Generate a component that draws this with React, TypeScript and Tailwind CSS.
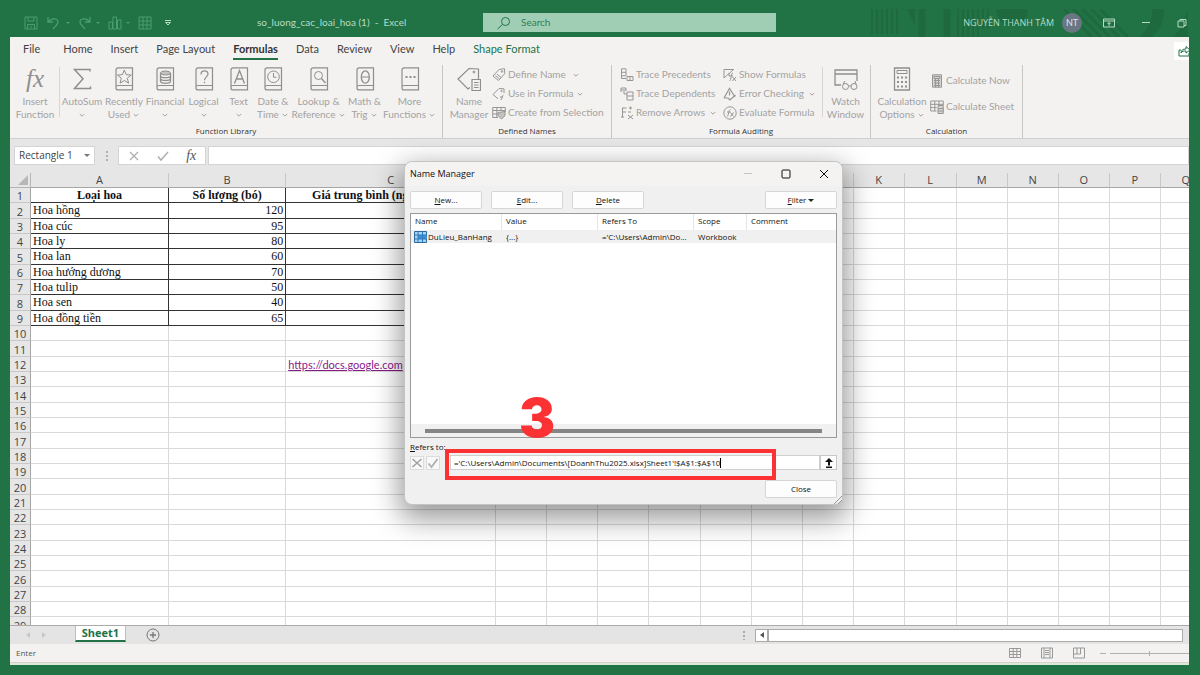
import type { ReactNode } from "react";

type IconProps = { children: ReactNode; box?: string; className?: string };

function Icon({ children, box = "0 0 24 24", className = "h-6 w-6" }: IconProps) {
  return (
    <svg viewBox={box} className={`shrink-0 ${className}`} fill="none" stroke="currentColor" strokeWidth="1" aria-hidden="true">
      {children}
    </svg>
  );
}

function Chevron({ className = "" }: { className?: string }) {
  return (
    <Icon box="0 0 8 8" className={`h-2 w-2 ${className}`}>
      <path d="M1.8 3 4 5.2 6.2 3" />
    </Icon>
  );
}

function Book({ children }: { children: ReactNode }) {
  return (
    <Icon>
      <path d="M20.5 18.500V.9H6a2 2 0 0 0-2 2v18a2 2 0 0 0 2 2h14.500v-4.400H6a2 2 0 0 0-2 2" strokeWidth="1.200" />
      {children}
    </Icon>
  );
}

const libraryButtons: { lines: [string, string]; width: string; icon: ReactNode }[] = [
  {
    lines: ["AutoSum", ""],
    width: "w-[42px]",
    icon: (
      <Icon>
        <path d="M20 4.500V2.500H4.500l8.500 9.300-8.500 9.700H20.500v-2" strokeWidth="1.500" />
      </Icon>
    ),
  },
  {
    lines: ["Recently", "Used"],
    width: "w-[42px]",
    icon: (
      <Book>
        <path d="m12.300 3 1.900 4.700 5 .3-3.900 3.200 1.300 5-4.300-2.700-4.300 2.700 1.300-5L5.400 8l5-.3z" />
      </Book>
    ),
  },
  {
    lines: ["Financial", ""],
    width: "w-[40px]",
    icon: (
      <Book>
        <ellipse cx="12.500" cy="6" rx="5" ry="2" fill="#c4c3c2" />
        <path d="M7.500 6v8c0 1.200 2.200 2.200 5 2.200s5-1 5-2.200V6M7.500 8.700c0 1.200 2.200 2 5 2s5-.8 5-2M7.500 11.400c0 1.200 2.200 2 5 2s5-.8 5-2" strokeWidth="1.300" />
      </Book>
    ),
  },
  {
    lines: ["Logical", ""],
    width: "w-[37px]",
    icon: (
      <Book>
        <path d="M9 7.500c0-2.500 1.600-3.600 3.500-3.600s3.500 1.200 3.500 3.200c0 2.600-3.500 3-3.500 6.200M12.500 14.800v1.500" strokeWidth="1.200" />
      </Book>
    ),
  },
  {
    lines: ["Text", ""],
    width: "w-[33px]",
    icon: (
      <Book>
        <path d="m7.500 16.500 5-13 5 13M9.200 12h6.600" strokeWidth="1.300" />
      </Book>
    ),
  },
  {
    lines: ["Date &", "Time"],
    width: "w-[36px]",
    icon: (
      <Book>
        <circle cx="12.500" cy="9.800" r="5.800" />
        <path d="M12.500 6v4.200h3" />
      </Book>
    ),
  },
  {
    lines: ["Lookup &", "Reference"],
    width: "w-[55px]",
    icon: (
      <Book>
        <circle cx="11.500" cy="8.500" r="4" />
        <path d="m14.500 11.500 4 4.500" strokeWidth="1.300" />
      </Book>
    ),
  },
  {
    lines: ["Math &", "Trig"],
    width: "w-[37px]",
    icon: (
      <Book>
        <ellipse cx="12.300" cy="10" rx="4" ry="6.200" strokeWidth="1.300" />
        <path d="M8.300 10h8" />
      </Book>
    ),
  },
  {
    lines: ["More", "Functions"],
    width: "w-[53px]",
    icon: (
      <Book>
        <path d="M7.500 10h2M11.500 10h2M15.500 10h2" strokeWidth="2" />
      </Book>
    ),
  },
];

type BigProps = { icon: ReactNode; lines: [string, string]; width: string; menu?: boolean };

function BigButton({ icon, lines, width, menu = false }: BigProps) {
  return (
    <button className={`flex shrink-0 flex-col items-center whitespace-nowrap text-[#8f8e8d] ${width}`}>
      {icon}
      <span className="mt-1 text-[10px] leading-[13px] text-[#a3a2a1]">{lines[0]}</span>
      <span className="flex h-[13px] items-center gap-0.5 text-[10px] leading-[13px] text-[#a3a2a1]">
        {lines[1]}
        {menu && <Chevron />}
      </span>
    </button>
  );
}

function SmallButton({ icon, label, menu }: { icon: ReactNode; label: string; menu?: string }) {
  return (
    <button className="flex h-[19px] items-center gap-0.5 whitespace-nowrap text-[10px] text-[#a3a2a1]">
      {icon}
      <span>{label}</span>
      {menu && <Chevron className={menu} />}
    </button>
  );
}

function Group({ title, width, children }: { title: string; width: string; children: ReactNode }) {
  return (
    <section className={`flex shrink-0 flex-col border-r border-[#c8c6c4] ${width}`}>
      <div className="flex flex-1 items-start">{children}</div>
      <h2 className="text-center font-['Open_Sans',sans-serif] text-[8px] leading-[14px] text-[#333]">{title}</h2>
    </section>
  );
}

const small = "h-3.5 w-3.5 text-[#979695]";

const tagIcon = (
  <Icon box="0 0 14 14" className={small}>
    <path d="M1 8 7 1.500l5.500-.8.200 5L6.500 12.500zM3.500 7.500l4 3.500M5 6l4 3.500" />
    <circle cx="10" cy="3.500" r=".8" />
  </Icon>
);
const useIcon = (
  <Icon box="0 0 14 14" className={small}>
    <path d="M6 11.800 1 7.500 7 1.500l5 .3V6M11.500 8c-1.500 0-1.300 4.500-2.800 5M8 10h3" />
    <circle cx="9.500" cy="4" r=".7" />
  </Icon>
);
const createIcon = (
  <Icon box="0 0 14 14" className={small}>
    <path d="M6 11.500H.7v-10h12.600V6M.7 4.500h12.600M.7 8H6M4.800 1.500v10M9 1.500V5" />
    <path d="m6 6.500 7-1v4.200L9.500 13 6 9.500z" fill="#c4c3c2" />
  </Icon>
);
const precedentsIcon = (
  <Icon box="0 0 14 14" className={small}>
    <path d="M1.500.8H6v7H1.500zM1.500 4.300H6M1.500 7.500v3H6M7 8.500h6v4H7zM10 8.500v4" />
  </Icon>
);
const dependentsIcon = (
  <Icon box="0 0 14 14" className={small}>
    <path d="M1 5V1h5v3M1 3h5M4 4v3h3M7 5h6v8H7zM7 9h6" />
  </Icon>
);
const removeIcon = (
  <Icon box="0 0 14 14" className={small}>
    <path d="M2.500 2v9.500M2 2h4.500M9 2h3M10.500.5v3M2 6h4M8 6h3M1 11h3" />
    <path d="m8 9 5 4M13 9l-5 4" />
  </Icon>
);
const showIcon = (
  <Icon box="0 0 14 14" className={small}>
    <path d="M1 10V1.500h10M1 10 10.500 1.500M6 8v-3M10 5c-2-.5-1.500 7-3.500 8M6 8h4M9.500 9l3.500 4M13 9l-3.500 4" />
  </Icon>
);
const errorIcon = (
  <Icon box="0 0 14 14" className={small}>
    <path d="M1 11 6.500 1.500 12 10M6.500 4.500v4M1 11h4M5 11l2 2 5.500-5" strokeWidth="1.200" />
  </Icon>
);
const evaluateIcon = (
  <Icon box="0 0 14 14" className={small}>
    <circle cx="7" cy="7" r="6.200" />
    <path d="M7.500 3.500c-2 0-1.800 7-3.500 7M4 6h3.500M7.500 6.500l3 4M10.500 6.500l-3 4" />
  </Icon>
);
const nowIcon = (
  <Icon box="0 0 14 14" className={small}>
    <path d="M2.500.8h9v12.400h-9zM4 2.500h6v2H4zM4 6.500h6M4 9h6M4 11.500h6M5.500 5v8M8.500 5v8" fill="#d5d4d3" />
  </Icon>
);
const sheetIcon = (
  <Icon box="0 0 14 14" className={small}>
    <path d="M6.500 11H.7V1h12.600v4M.7 4.300h12.600M.7 7.600h6M4.800 1v10M9 1v4" />
    <path d="M8 5.500h5.300v8H8zM8 8.500h5.300M8 11h5.300" fill="#d5d4d3" />
  </Icon>
);

const tabs = ["Home", "Insert", "Page Layout", "Formulas", "Data", "Review", "View", "Help", "Shape Format"];

function TitleBar() {
  const caret = <span className="h-0 w-0 border-x-2 border-t-2 border-x-transparent border-t-[#4a9d6e]" />;
  return (
    <header className="relative flex h-[37px] shrink-0 items-center pt-2 pr-3 font-['Lato','Open_Sans',sans-serif] text-[10px] text-[#b5dcc6]">
      <svg className="absolute right-3 bottom-0 h-7 w-[320px]" viewBox="0 0 320 28" fill="none" stroke="#1f693e" strokeWidth="2" aria-hidden="true">
        <path d="M4 0v25M9 0v25M14 0v25M19 0v25M24 0v25M29 0v25M90 0v28M95 0v28M100 0v28M105 0v28M110 0v28M115 0v20M120 0v20" />
        <path d="M54 0v28M79 0v28" strokeWidth="7" />
        <path d="M39 0l8 18V0zM128 0h32c0 10-6 16-16 16s-16-6-16-16z" fill="#1f693e" stroke="none" />
        <path d="m196 0 28 28M205 0l28 28M214 0l28 28M223 0l28 28M232 0l28 28" strokeWidth="3" />
        <path d="M284 0h12c0 12-3 20-12 28h-13c10-8 13-16 13-28zM320 0v28h-16c10-6 12-18 16-28z" fill="#1f693e" stroke="none" />
      </svg>
      <div className="flex w-[257px] shrink-0 items-center gap-2 pl-6 text-[#4a9d6e]">
        <button aria-label="Save">
          <Icon box="0 0 14 14" className="h-3.5 w-3.5">
            <path d="M1 1h12v12H1zM4 1v4h6V1M3.500 13V8.500h7V13M6 11h2" />
          </Icon>
        </button>
        <button aria-label="Undo" className="flex items-center gap-1.5">
          <Icon box="0 0 14 14" className="h-3.5 w-3.5">
            <path d="M2 1v5h5M2 6c4-5 10-3.500 10 0 0 2.500-3 4.500-5 7" strokeWidth="1.300" />
          </Icon>
          {caret}
        </button>
        <button aria-label="Redo" className="flex items-center gap-1">
          <Icon box="0 0 14 14" className="h-3.5 w-3.5">
            <path d="M12 1v5H7M12 6C8 1 2 2.500 2 6c0 2.500 3 4.500 5 7" strokeWidth="1.300" />
          </Icon>
          {caret}
        </button>
        <button aria-label="Chart" className="flex items-center gap-1">
          <Icon box="0 0 14 14" className="h-3.5 w-3.5">
            <path d="M1 6h3.500v7H1zM5 1h3.500v12H5zM9.500 4H13v9H9.500z" />
          </Icon>
          {caret}
        </button>
        <button aria-label="Table">
          <Icon box="0 0 14 14" className="h-3.5 w-3.5">
            <path d="M1 1h12v12H1zM1 5h12M1 9h12M5 1v12M9 1v12" />
          </Icon>
        </button>
        <button aria-label="Customize" className="ml-1 text-[#b5dcc6]">
          <Icon box="0 0 8 8" className="h-2 w-2">
            <path d="M1 1.500h6M1.500 3.500h5L4 6z" />
          </Icon>
        </button>
      </div>
      <h1 className="w-[226px] shrink-0 whitespace-pre">so_luong_cac_loai_hoa (1)  -  Excel</h1>
      <label className="flex h-[19px] w-[293px] shrink-0 items-center gap-2.5 bg-[#9fceb4] pl-3.5 text-[#217346]">
        <Icon box="0 0 14 14" className="h-3.5 w-3.5">
          <circle cx="8.500" cy="5.500" r="4" />
          <path d="m5.500 8.500-5 4.500" />
        </Icon>
        <input type="search" aria-label="Search" placeholder="Search" className="min-w-0 flex-1 bg-transparent outline-none placeholder:text-[#2f8055]" />
      </label>
      <div className="relative ml-auto flex shrink-0 items-center">
        <span className="font-['Open_Sans',sans-serif] text-[9px] whitespace-nowrap">NGUYỄN THANH TÂM</span>
        <span className="ml-2 flex h-5 w-5 items-center justify-center rounded-full bg-[#6b7683] text-[9px] text-[#dfe6ea]">NT</span>
        <button aria-label="Ribbon display options" className="ml-[21px]">
          <Icon box="0 0 12 12" className="h-3 w-3">
            <path d="M.5 2h11v8H.5zM.5 4h11M6 9V5.500M4.500 7 6 5.500 7.500 7" />
          </Icon>
        </button>
        <button aria-label="Minimize" className="ml-[25px]">
          <Icon box="0 0 12 12" className="h-3 w-3">
            <path d="M2 5.500h8" />
          </Icon>
        </button>
        <button aria-label="Restore" className="ml-6">
          <Icon box="0 0 12 12" className="h-3 w-3">
            <path d="M2 4h6v6H2zM4 4V2.500h6v6H8" />
          </Icon>
        </button>
      </div>
    </header>
  );
}

function Ribbon() {
  return (
    <div className="flex h-[101px] shrink-0 flex-col bg-[#f3f2f1] font-['Lato','Open_Sans',sans-serif]">
      <nav className="flex h-[25px] shrink-0 items-center gap-[18px] overflow-hidden pl-[13px] text-[11px] whitespace-nowrap text-[#444]">
        <button className="mr-[5px]">File</button>
        {tabs.map((tab) =>
          tab === "Formulas" ? (
            <button key={tab} className="flex h-[23px] items-center self-start border-b-2 border-[#217346] pt-1 font-bold text-[#333]">
              {tab}
            </button>
          ) : (
            <button key={tab} className={tab === "Shape Format" ? "text-[#217346]" : ""}>
              {tab}
            </button>
          ),
        )}
        <button aria-label="Share" className="mt-[3px] ml-auto flex h-[18px] w-[15px] items-center overflow-hidden bg-white pl-1 text-[#217346]">
          <Icon box="0 0 12 12" className="h-3 w-3">
            <path d="M3 5H1v6h10V8M3 8c0-3 2-4 5-4V1.500L12 5 8 8V6C6 6 4 6 3 8z" />
          </Icon>
        </button>
      </nav>
      <div className="flex flex-1 overflow-hidden pt-[3px]">
        <Group title="Function Library" width="w-[433px]">
          <div className="flex pt-0.5 pl-px">
            <BigButton
              width="w-[48px]"
              lines={["Insert", "Function"]}
              icon={
                <span className="flex h-6 items-center font-['Liberation_Serif',serif] text-[25px] leading-6 italic" aria-hidden="true">
                  fx
                </span>
              }
            />
            <span className="mr-px h-[50px] w-px bg-[#d8d6d4]" />
            {libraryButtons.map((b) => (
              <BigButton key={b.lines[0]} icon={b.icon} lines={b.lines} width={b.width} menu />
            ))}
          </div>
        </Group>
        <Group title="Defined Names" width="w-[169px]">
          <div className="flex pt-0.5 pl-[5px]">
            <BigButton
              width="w-[42px]"
              lines={["Name", "Manager"]}
              icon={
                <Icon>
                  <path d="M13 20.500 11 22 1 12 12 1.500l9.500.5V12" strokeWidth="1.200" />
                  <circle cx="17" cy="5" r="1" />
                  <path d="M15 12.500h8.500v11H15zM17 15.500h4.500M17 18h4.500M17 20.500h4.500" strokeWidth="1.200" />
                </Icon>
              }
            />
          </div>
          <div className="ml-0.5 flex flex-col">
            <SmallButton icon={tagIcon} label="Define Name" menu="ml-1" />
            <SmallButton icon={useIcon} label="Use in Formula" menu="ml-0" />
            <SmallButton icon={createIcon} label="Create from Selection" />
          </div>
        </Group>
        <Group title="Formula Auditing" width="w-[259px]">
          <div className="flex w-[105px] flex-col pl-2">
            <SmallButton icon={precedentsIcon} label="Trace Precedents" />
            <SmallButton icon={dependentsIcon} label="Trace Dependents" />
            <SmallButton icon={removeIcon} label="Remove Arrows" menu="ml-auto" />
          </div>
          <div className="ml-1.5 flex w-[99px] flex-col">
            <SmallButton icon={showIcon} label="Show Formulas" />
            <SmallButton icon={errorIcon} label="Error Checking" menu="mr-1.5 ml-auto" />
            <SmallButton icon={evaluateIcon} label="Evaluate Formula" />
          </div>
          <div className="flex pt-0.5">
            <span className="h-[50px] w-px bg-[#d8d6d4]" />
            <BigButton
              width="w-[45px]"
              lines={["Watch", "Window"]}
              icon={
                <Icon>
                  <path d="M7 18H1V3h22v11M1 7h22" strokeWidth="1.300" />
                  <circle cx="11.500" cy="19.500" r="3" />
                  <circle cx="20" cy="19.500" r="3" />
                  <path d="M14.500 19h2.500M9 17l2-3M22 17l-1-3" />
                </Icon>
              }
            />
          </div>
        </Group>
        <Group title="Calculation" width="w-[152px]">
          <div className="flex pt-0.5 pl-[6px]">
            <BigButton
              width="w-[50px]"
              lines={["Calculation", "Options"]}
              menu
              icon={
                <Icon>
                  <path d="M4.500 1h15v22h-15z" strokeWidth="1.300" />
                  <path d="M7 3.500h10v3H7z" />
                  <path d="M7 10.500h2m2 0h2m2 0h2M7 15h2m2 0h2m2 0h2M7 19.500h2m2 0h2m2 0h2" strokeWidth="2" />
                </Icon>
              }
            />
          </div>
          <div className="ml-[3px] flex flex-col gap-[7px] pt-1.5">
            <SmallButton icon={nowIcon} label="Calculate Now" />
            <SmallButton icon={sheetIcon} label="Calculate Sheet" />
          </div>
        </Group>
      </div>
    </div>
  );
}

function FormulaBar() {
  return (
    <div className="flex h-[35px] shrink-0 items-start border-t border-[#d2d0ce] bg-[#e6e6e6] pt-[7px] text-[10px] text-[#444]">
      <button className="ml-1 flex h-[19px] w-[81px] shrink-0 items-center justify-between border border-[#d4d4d4] bg-white px-1 whitespace-nowrap">
        Rectangle 1
        <span className="h-0 w-0 border-x-[3px] border-t-[3px] border-x-transparent border-t-[#777]" />
      </button>
      <span className="flex h-[19px] w-[23px] shrink-0 items-center justify-center text-[#b0b0b0]">
        <Icon box="0 0 2 12" className="h-3 w-0.5">
          <path d="M1 1v10" strokeWidth="2" strokeDasharray="2 2" />
        </Icon>
      </span>
      <div className="flex h-[19px] w-[88px] shrink-0 items-center justify-around border border-[#d4d4d4] bg-white text-[#b0b0b0]">
        <button aria-label="Cancel">
          <Icon box="0 0 12 12" className="h-3 w-3">
            <path d="m2 2 8 8M10 2l-8 8" strokeWidth="1.300" />
          </Icon>
        </button>
        <button aria-label="Enter">
          <Icon box="0 0 12 12" className="h-3 w-3">
            <path d="m1 6.500 3 3.500 7-8" strokeWidth="1.500" />
          </Icon>
        </button>
        <button className="font-['Liberation_Serif',serif] text-[14px] leading-4 text-[#555] italic">fx</button>
      </div>
      <input aria-label="Formula" className="ml-0.5 h-[19px] min-w-0 flex-1 border border-[#d4d4d4] bg-white" />
    </div>
  );
}

const flowers: [string, number][] = [
  ["Hoa hồng", 120],
  ["Hoa cúc", 95],
  ["Hoa ly", 80],
  ["Hoa lan", 60],
  ["Hoa hướng dương", 70],
  ["Hoa tulip", 50],
  ["Hoa sen", 40],
  ["Hoa đồng tiền", 65],
];
const columns = "ABCDEFGHIJKLMNOPQ".split("");
const rows = Array.from({ length: 29 }, (_, i) => i + 1);

function cell(row: number, col: string): ReactNode {
  if (row === 1) return { A: "Loại hoa", B: "Số lượng (bó)", C: "Giá trung bình (ngàn đồng/bó)" }[col] ?? null;
  if (row <= 9 && col === "A") return flowers[row - 2][0];
  if (row <= 9 && col === "B") return flowers[row - 2][1];
  if (row === 12 && col === "C")
    return (
      <a href="https://docs.google.com" className="block font-['Lato',sans-serif] text-[11px] leading-[13px] text-[#8a1a8a] underline">
        https://docs.google.com
      </a>
    );
  return null;
}

function cellClass(row: number, col: string) {
  const framed = row <= 9 && (col === "A" || col === "B" || col === "C");
  const border = framed ? "border-[#333]" : "border-[#d9d9d9]";
  const align = row === 1 ? "text-center font-bold" : col === "B" ? "text-right" : "text-left";
  return `border-r border-b px-0.5 ${border} ${align}`;
}

function Sheet() {
  return (
    <div className="min-h-0 flex-1 overflow-hidden bg-white">
      <table className="w-[1202px] table-fixed border-separate border-spacing-0">
        <colgroup>
          <col className="w-[21px]" />
          <col className="w-[138px]" />
          <col className="w-[117px]" />
          <col className="w-[210px]" />
          {columns.slice(3).map((c) => (
            <col key={c} className={c === "L" ? "w-[52px]" : "w-[51px]"} />
          ))}
        </colgroup>
        <thead>
          <tr className="h-[15px] bg-[#e6e6e6] text-[11px] leading-[14px] text-[#444]">
            <th className="border-r border-b border-[#b5b5b5] p-0">
              <svg viewBox="0 0 20 14" className="block h-3.5 w-5" aria-hidden="true">
                <path d="M18 2v10H8z" fill="#b7b7b7" />
              </svg>
            </th>
            {columns.map((c) => (
              <th key={c} scope="col" className="border-r border-b border-r-[#c8c8c8] border-b-[#a6a6a6] p-0 font-normal">
                {c}
              </th>
            ))}
          </tr>
        </thead>
        <tbody>
          {rows.map((r) => (
            <tr key={r} className="h-[15px] text-[12px] leading-[13px] text-[#111] nth-[3n+2]:h-[16px]">
              <th scope="row" className="border-r border-b border-r-[#a6a6a6] border-b-[#c8c8c8] bg-[#e6e6e6] p-0 pt-px text-[11px] font-normal text-[#444]">
                {r}
              </th>
              {columns.map((c) => (
                <td key={c} className={`overflow-hidden pt-px pb-0 align-top font-['Liberation_Serif',serif] whitespace-nowrap ${cellClass(r, c)}`}>
                  {cell(r, c)}
                </td>
              ))}
            </tr>
          ))}
        </tbody>
      </table>
    </div>
  );
}

function Footer() {
  return (
    <footer className="shrink-0">
      <div className="flex h-[19px] items-start border-t border-[#ababab] bg-[#e4e4e4] pr-1.5">
        <div className="flex h-[18px] w-[65px] shrink-0 items-center gap-3 pl-4 text-[#bbb]">
          <button aria-label="Previous sheet" className="h-0 w-0 border-y-[3px] border-r-4 border-y-transparent border-r-[#c8c8c8]" />
          <button aria-label="Next sheet" className="h-0 w-0 border-y-[3px] border-l-4 border-y-transparent border-l-[#c8c8c8]" />
        </div>
        <button className="flex h-4 w-[51px] shrink-0 items-center justify-center border-x border-b-2 border-x-[#c0c0c0] border-b-[#217346] bg-white text-[11px] font-bold text-[#217346]">
          Sheet1
        </button>
        <button aria-label="New sheet" className="mt-0.5 ml-5 text-[#777]">
          <Icon box="0 0 14 14" className="h-3.5 w-3.5">
            <circle cx="7" cy="7" r="6" />
            <path d="M7 4v6M4 7h6" strokeWidth="1.300" />
          </Icon>
        </button>
        <div className="ml-auto flex h-[18px] items-center">
          <Icon box="0 0 2 10" className="mr-2.5 h-2.5 w-0.5 text-[#a8a8a8]">
            <path d="M1 1v9" strokeWidth="2" strokeDasharray="2 2" />
          </Icon>
          <button aria-label="Scroll left" className="flex h-[13px] w-[13px] items-center justify-center border border-[#ababab] bg-white">
            <span className="h-0 w-0 border-y-[3px] border-r-4 border-y-transparent border-r-[#555]" />
          </button>
          <span className="h-[13px] w-[415px] border border-[#ababab] bg-white" />
        </div>
      </div>
      <div className="flex h-[19px] items-center border-b border-[#d9cfc8] bg-[#f3f2f1] pl-1.5 text-[8px] text-[#555]">
        Enter
        <div className="ml-auto flex items-center text-[#999]">
          <button aria-label="Normal view">
            <Icon box="0 0 12 12" className="h-3 w-3">
              <path d="M.5 1.500h11v9H.5zM.5 4.500h11M.5 7.500h11M4.200 1.500v9M7.800 1.500v9" />
            </Icon>
          </button>
          <button aria-label="Page layout view" className="ml-5">
            <Icon box="0 0 12 12" className="h-3 w-3">
              <path d="M.5 1h11v10H.5zM3 1v10M9 1v10M4 3.500h4M4 5.500h4M4 7.500h4" />
            </Icon>
          </button>
          <button aria-label="Page break view" className="ml-5">
            <Icon box="0 0 12 12" className="h-3 w-3">
              <path d="M.5 1h11v10H.5zM.5 7h7V1M4 1v6" />
            </Icon>
          </button>
          <Icon box="0 0 90 12" className="ml-3.5 h-3 w-[90px] text-[#b0b0b0]">
            <path d="M1 6.500h6M11 6.500h79M50.500 4v5" />
          </Icon>
        </div>
      </div>
    </footer>
  );
}

const dialogButton =
  "flex h-[18px] w-[72px] items-center justify-center gap-0.5 rounded-[2px] border border-[#d6d6d6] bg-[#fdfdfd] text-[8px] text-[#111]";

function NameManager() {
  return (
    <div
      role="dialog"
      aria-label="Name Manager"
      className="absolute top-[161px] left-[404px] w-[439px] rounded-lg border border-[#c4c4c4] bg-[#f0f0f0] px-[5px] pb-1.5 text-[8px] text-[#111] shadow-[0_10px_28px_4px_rgba(0,0,0,0.4)]"
    >
      <div className="-mx-[5px] flex h-6 items-center rounded-t-lg bg-[#f4f3f2] pr-3 pl-[5px]">
        <h2 className="text-[9px]">Name Manager</h2>
        <div className="ml-auto flex items-center gap-[26px]">
          <button aria-label="Minimize" className="text-[#c4c4c4]">
            <Icon box="0 0 12 12" className="h-3 w-3">
              <path d="M2 5.500h8" />
            </Icon>
          </button>
          <button aria-label="Maximize">
            <Icon box="0 0 12 12" className="h-3 w-3">
              <rect x="2" y="2" width="8" height="8" rx="1" />
            </Icon>
          </button>
          <button aria-label="Close window">
            <Icon box="0 0 12 12" className="h-3 w-3">
              <path d="m2 2 8 8M10 2l-8 8" />
            </Icon>
          </button>
        </div>
      </div>
      <div className="mt-[5px] flex gap-[9px]">
        <button className={dialogButton}>
          <span><u>N</u>ew...</span>
        </button>
        <button className={dialogButton}>
          <span><u>E</u>dit...</span>
        </button>
        <button className={dialogButton}>
          <span><u>D</u>elete</span>
        </button>
        <button className={`ml-auto ${dialogButton}`}>
          <span><u>F</u>ilter</span>
          <span className="h-0 w-0 border-x-[3px] border-t-[3px] border-x-transparent border-t-[#222]" />
        </button>
      </div>
      <div className="mt-1 flex h-[225px] flex-col border border-[#9a9a9a] bg-white">
        <table className="w-full table-fixed border-separate border-spacing-0 text-left whitespace-nowrap">
          <thead>
            <tr className="h-4 leading-[14px]">
              <th className="w-[91px] border-r border-[#e5e5e5] p-0 pb-0.5 pl-1 font-normal">Name</th>
              <th className="w-[96px] border-r border-[#e5e5e5] p-0 pb-0.5 pl-1 font-normal">Value</th>
              <th className="w-[96px] border-r border-[#e5e5e5] p-0 pb-0.5 pl-1 font-normal">Refers To</th>
              <th className="w-[53px] border-r border-[#e5e5e5] p-0 pb-0.5 pl-1 font-normal">Scope</th>
              <th className="p-0 pb-0.5 pl-1 font-normal">Comment</th>
            </tr>
          </thead>
          <tbody>
            <tr className="h-[13px] bg-[#f0f0f0] leading-[12px]">
              <td className="p-0 pl-[3px]">
                <span className="flex items-center gap-px">
                  <svg viewBox="0 0 13 12" className="h-3 w-[13px] shrink-0" aria-hidden="true">
                    <path d="M.5.5h12v11H.5z" fill="#a9d3f2" stroke="#2d6b9f" />
                    <path d="M4 4h9v4H4z" fill="#3d8fd1" />
                    <path d="M1 4h11M1 8h11M4 1v10M8.500 1v10" stroke="#2d7cc0" />
                  </svg>
                  DuLieu_BanHang
                </span>
              </td>
              <td className="p-0 pl-1">{"{...}"}</td>
              <td className="p-0 pl-1">='C:\Users\Admin\Do...</td>
              <td className="p-0 pl-1">Workbook</td>
              <td />
            </tr>
          </tbody>
        </table>
        <div className="mt-auto flex h-[13px] items-center bg-[#f0f0f0] px-3.5">
          <span className="h-1 flex-1 bg-[#858585]" />
        </div>
      </div>
      <label htmlFor="refers-to" className="mt-0.5 block leading-[13px]">
        <u>R</u>efers to:
      </label>
      <div className="mt-0.5 flex h-[15px] items-center">
        <button aria-label="Discard" className="flex h-3.5 w-3.5 items-center justify-center border border-[#dcdcdc] bg-[#f8f8f8] text-[#a0a0a0]">
          <Icon box="0 0 12 12" className="h-3 w-3">
            <path d="m1.500 2 9 8M10.500 2l-9 8" strokeWidth="1.500" />
          </Icon>
        </button>
        <button aria-label="Accept" className="ml-0.5 flex h-3.5 w-3.5 items-center justify-center border border-[#dcdcdc] bg-[#f8f8f8] text-[#b0b0b0]">
          <Icon box="0 0 12 12" className="h-3 w-3">
            <path d="m1.500 6.500 3 3.500 6-8" strokeWidth="1.800" />
          </Icon>
        </button>
        <div className="ml-2.5 flex h-[15px] flex-1 items-center border border-[#cfcfcf] bg-white pl-[3px]">
          <input
            id="refers-to"
            defaultValue="='C:\Users\Admin\Documents\[DoanhThu2025.xlsx]Sheet1'!$A$1:$A$10"
            className="field-sizing-content bg-transparent p-0 leading-[13px] outline-none"
          />
          <span className="h-2.5 w-px bg-black" />
        </div>
        <button aria-label="Collapse dialog" className="flex h-[15px] w-[17px] items-center justify-center border border-[#c8c8c8] bg-[#fdfdfd]">
          <svg viewBox="0 0 10 10" className="h-2.5 w-2.5" fill="#111" aria-hidden="true">
            <path d="M5 0 9 4H6v3.500H4V4H1zM2 8.500h6V10H2z" />
          </svg>
        </button>
      </div>
      <div className="mt-2.5 flex justify-end">
        <button className={dialogButton}>Close</button>
      </div>
      <svg viewBox="0 0 8 8" className="absolute right-0 bottom-0 h-2 w-2" stroke="#9a9a9a" aria-hidden="true">
        <path d="M0 8 8 0M4 8l4-4" />
      </svg>
      <div className="pointer-events-none absolute top-[287px] left-10 h-[31px] w-[331px] border-4 border-[#fb3133]" />
      <span className="pointer-events-none absolute top-[228px] left-[114px] font-['Inter',sans-serif] text-[54px] leading-[56px] font-black text-[#fb3133]">3</span>
    </div>
  );
}

export default function App() {
  return (
    <div className="relative flex h-screen flex-col overflow-hidden bg-[#217346] font-['Open_Sans','Noto_Sans',sans-serif]">
      <TitleBar />
      <main className="mr-[11px] mb-2.5 ml-2.5 flex min-h-0 flex-1 flex-col overflow-hidden bg-[#d9ead9] pb-0.5">
        <Ribbon />
        <FormulaBar />
        <Sheet />
        <Footer />
      </main>
      <NameManager />
    </div>
  );
}
